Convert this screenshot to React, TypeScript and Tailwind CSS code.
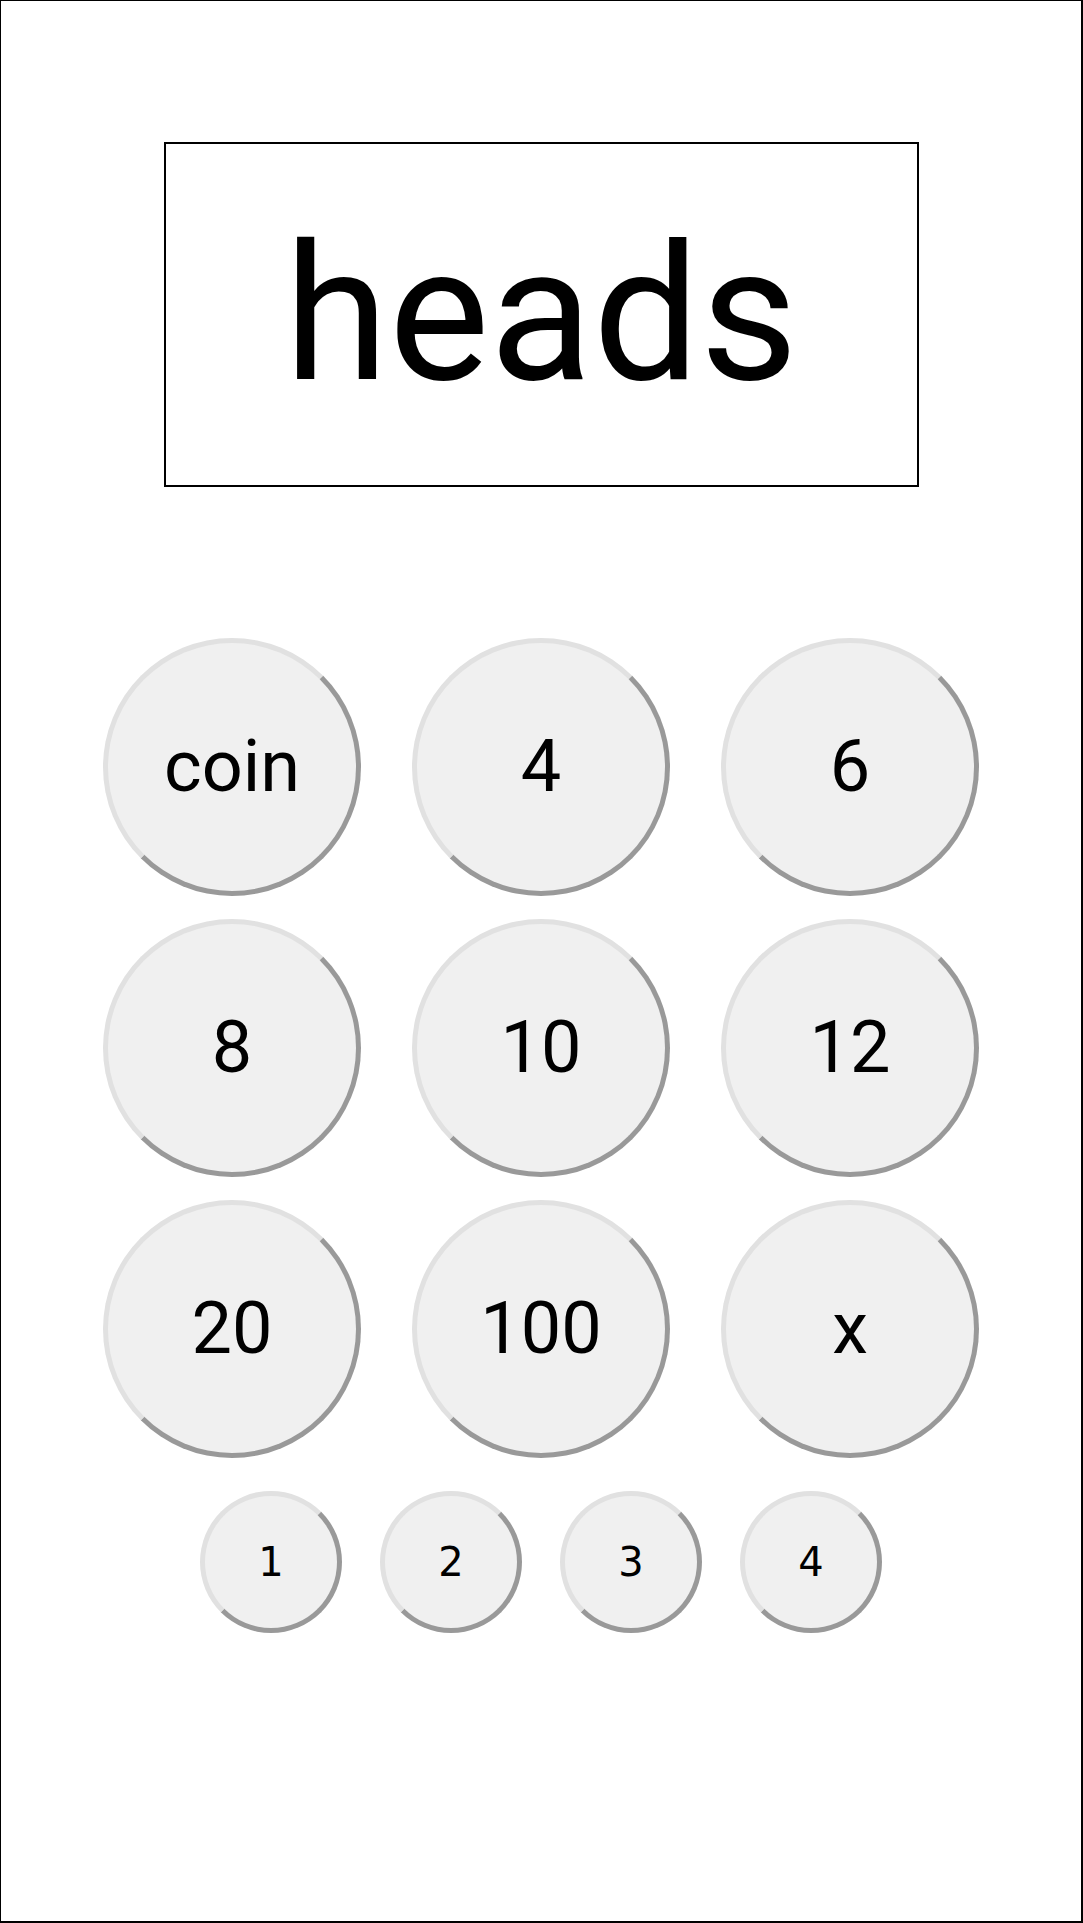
import React from "react";

const big = ["coin", "4", "6", "8", "10", "12", "20", "100", "x"];
const small = ["1", "2", "3", "4"];

export default function App() {
  return (
    <div className="w-[1083px] h-[1923px] border-l border-t border-r-2 border-b-2 border-black bg-white flex flex-col items-center">
      <div
        className="mt-[141px] w-[755px] h-[345px] border-2 border-black flex items-center justify-center text-black text-[190px] leading-[1.172]"
        style={{ fontFamily: "Roboto, sans-serif" }}
      >
        heads
      </div>
      <div className="mt-[151px] grid grid-cols-[258px_258px_258px] gap-x-[51px] gap-y-[23px]">
        {big.map((t, i) => (
          <button
            key={i}
            className="w-[258px] h-[258px] rounded-full bg-[#f0f0f0] border-[5px] border-t-[#e1e1e1] border-l-[#e1e1e1] border-r-[#999999] border-b-[#999999] flex items-center justify-center text-black text-[72px] leading-[1.172]"
            style={{ fontFamily: "Roboto, sans-serif" }}
          >
            {t}
          </button>
        ))}
      </div>
      <div className="mt-[33px] flex gap-[38px]">
        {small.map((t, i) => (
          <button
            key={i}
            className="w-[142px] h-[142px] rounded-full bg-[#f0f0f0] border-[5px] border-t-[#e1e1e1] border-l-[#e1e1e1] border-r-[#999999] border-b-[#999999] flex items-center justify-center text-black text-[40px] leading-[1.164]"
            style={{ fontFamily: '"DejaVu Sans", sans-serif' }}
          >
            {t}
          </button>
        ))}
      </div>
    </div>
  );
}
